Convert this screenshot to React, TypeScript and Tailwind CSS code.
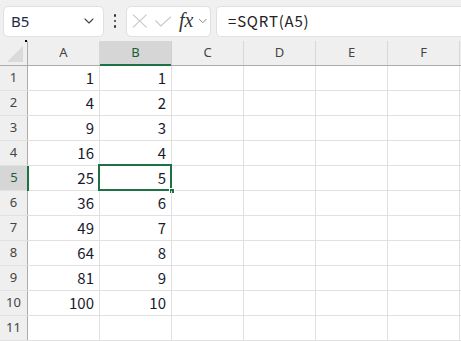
import { ChevronDown } from 'lucide-react';

const COLS = ['A', 'B', 'C', 'D', 'E', 'F'];
const ROWS = [
  [1, 1], [4, 2], [9, 3], [16, 4], [25, 5], [36, 6], [49, 7], [64, 8], [81, 9], [100, 10], null,
];

const cellFont = { fontFamily: '"Noto Sans CJK JP", "Noto Sans", sans-serif' };

export default function App() {
  return (
    <div className="h-[341px] w-[461px] overflow-hidden bg-white text-[#222]" style={{ fontFamily: '"Noto Sans", "Liberation Sans", sans-serif' }}>
      {/* Formula bar */}
      <div className="flex h-[41px] items-center bg-[#f0f0f0] pl-[3px] pt-[1px]">
        <div className="flex h-[31px] w-[101px] items-center justify-between rounded-[5px] border border-[#e0e0e0] bg-white pl-[7px] pr-[6px]">
          <span className="text-[15px] text-[#1f2a44]">B5</span>
          <ChevronDown className="h-4 w-4 text-[#444]" strokeWidth={1.6} />
        </div>
        <div className="flex w-[22px] flex-col items-center gap-[3px]">
          <span className="h-[2.5px] w-[2.5px] rounded-full bg-[#333]" />
          <span className="h-[2.5px] w-[2.5px] rounded-full bg-[#333]" />
          <span className="h-[2.5px] w-[2.5px] rounded-full bg-[#333]" />
        </div>
        <div className="flex h-[31px] w-[85px] items-center rounded-[5px] border border-[#e0e0e0] bg-white pl-[5px]">
          <svg width="16" height="14" viewBox="0 0 16 14" fill="none" stroke="#c8c8c8" strokeWidth="1.2">
            <path d="M1 0.5 L15 13.5 M15 0.5 L1 13.5" />
          </svg>
          <svg className="ml-[7px]" width="17" height="11" viewBox="0 0 17 11" fill="none" stroke="#c8c8c8" strokeWidth="1.2">
            <path d="M0.5 4.5 L6 10 L16.5 0.5" />
          </svg>
          <span className="ml-[8px] -mt-[3px] text-[20px] italic leading-none text-[#333]" style={{ fontFamily: '"Liberation Serif", serif' }}>fx</span>
          <ChevronDown className="ml-[3px] h-[14px] w-[14px] text-[#666]" strokeWidth={1.4} />
        </div>
        <div className="ml-[5px] flex h-[31px] flex-1 items-center rounded-l-[5px] border border-r-0 border-[#e0e0e0] bg-white pl-[11px]">
          <span className="text-[15px] tracking-[0.8px] text-[#222]" style={cellFont}>=SQRT(A5)</span>
        </div>
      </div>

      {/* Column headers */}
      <div className="flex h-[25px] border-b border-[#ababab] bg-[#efefef]">
        <div className="relative w-[28px] border-r border-[#ababab]">
          <div className="absolute bottom-[3px] right-[4px] h-0 w-0 border-b-[16px] border-l-[16px] border-b-[#dadada] border-l-transparent" />
          <span className="absolute -top-[1px] right-0 h-[2px] w-[2px] bg-black" />
        </div>
        {COLS.map((c) => (
          <div
            key={c}
            className={
              c === 'B'
                ? 'relative flex w-[72px] items-center justify-center border-r border-[#d0d0d0] bg-[#d6d6d6] text-[13px] text-[#1b5e3a]'
                : 'flex w-[72px] items-center justify-center border-r border-[#d8d8d8] text-[13px] text-[#444]'
            }
          >
            {c}
            {c === 'B' && <span className="absolute -bottom-[1px] left-0 h-[2px] w-full bg-[#1e7145]" />}
          </div>
        ))}
      </div>

      {/* Rows */}
      {ROWS.map((r, i) => {
        const sel = i === 4;
        return (
          <div key={i} className="flex h-[25px] border-b border-[#e1e1e1]">
            <div
              className={
                sel
                  ? 'relative flex w-[28px] items-center justify-center bg-[#d6d6d6] text-[13px] text-[#1b5e3a]'
                  : 'flex w-[28px] items-center justify-center border-r border-[#ababab] bg-[#efefef] text-[13px] text-[#444]'
              }
            >
              {i + 1}
              {sel && <span className="absolute -right-[1px] top-0 h-[25px] w-[2px] bg-[#1e7145]" />}
            </div>
            {COLS.map((c, j) => (
              <div
                key={c}
                className="relative flex w-[72px] items-center justify-end border-r border-[#e1e1e1] pr-[5px] text-[15px] text-[#1a1a2e]"
                style={cellFont}
              >
                {r && j < 2 ? r[j] : ''}
                {sel && c === 'B' && (
                  <>
                    <span className="absolute -left-[2px] -top-[2px] h-[27px] w-[74px] border-2 border-[#1e7145]" />
                    <span className="absolute -bottom-[4px] -right-[4px] h-[6px] w-[6px] border border-white bg-[#1e7145]" />
                  </>
                )}
              </div>
            ))}
          </div>
        );
      })}
    </div>
  );
}
